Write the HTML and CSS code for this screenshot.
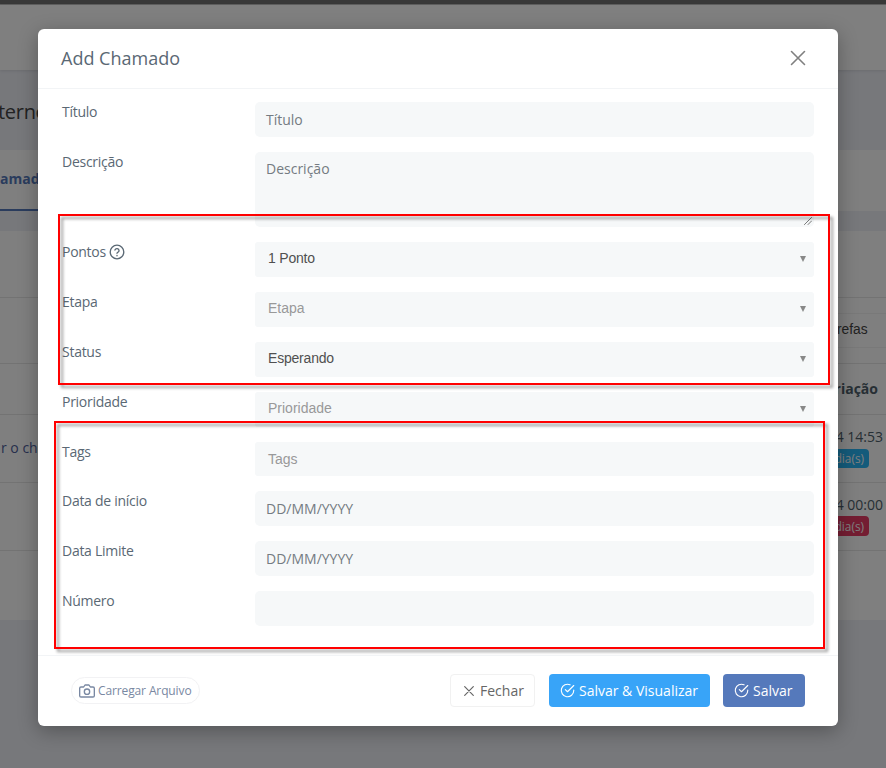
FILE: index.html
```html
<!DOCTYPE html>
<html lang="pt-BR">
<head>
<meta charset="utf-8">
<title>Add Chamado</title>
<link rel="stylesheet" href="styles.css">
</head>
<body>
<div class="page">
  <div class="strip"></div>
  <div class="topbar"></div>
  <div class="page-title">terno</div>
  <div class="tabs"><span class="tab">amado</span></div>
  <div class="card">
    <div class="row row-head"></div>
    <div class="row row-tools"><span class="tool">refas</span></div>
    <div class="row row-cols"><b>riação</b></div>
    <div class="row row-data">
      <span class="link">r o cha</span>
      <div class="when"><span>4 14:53</span><span class="badge info">dia(s)</span></div>
    </div>
    <div class="row row-data">
      <div class="when"><span>4 00:00</span><span class="badge late">dia(s)</span></div>
    </div>
  </div>
</div>
<div class="backdrop"></div>
<div class="modal">
  <header class="modal-header">
    <h1>Add Chamado</h1>
    <svg class="close" viewBox="0 0 16 16"><path d="M1.5 1.5l13 13M14.5 1.5l-13 13"/></svg>
  </header>
  <div class="modal-body">
    <div class="field"><label>Título</label><div class="control">Título</div></div>
    <div class="field"><label>Descrição</label><div class="control area">Descrição
      <svg class="grip" viewBox="0 0 9 9"><path d="M.5 8.5l8-8M4.5 8.5l4-4"/></svg></div></div>
    <div class="field"><label>Pontos <svg class="help" viewBox="0 0 24 24"><circle cx="12" cy="12" r="10.2"/><path d="M8.9 9a3.2 3.2 0 0 1 6.2 1c0 2-3.1 2.6-3.1 4M12 17v.6"/></svg></label><div class="control select chosen">1 Ponto<i class="arrow"></i></div></div>
    <div class="field"><label>Etapa</label><div class="control select">Etapa<i class="arrow"></i></div></div>
    <div class="field"><label>Status</label><div class="control select chosen">Esperando<i class="arrow"></i></div></div>
    <div class="field"><label>Prioridade</label><div class="control select">Prioridade<i class="arrow"></i></div></div>
    <div class="field"><label>Tags</label><div class="control select tags">Tags</div></div>
    <div class="field"><label>Data de início</label><div class="control">DD/MM/YYYY</div></div>
    <div class="field"><label>Data Limite</label><div class="control">DD/MM/YYYY</div></div>
    <div class="field"><label>Número</label><div class="control"></div></div>
  </div>
  <footer class="modal-footer">
    <div class="upload"><svg class="camera" viewBox="0 0 24 24"><path d="M23 19a2 2 0 0 1-2 2H3a2 2 0 0 1-2-2V8a2 2 0 0 1 2-2h4l2-3h6l2 3h4a2 2 0 0 1 2 2z"/><circle cx="12" cy="13" r="4"/></svg>Carregar Arquivo</div>
    <div class="btn plain"><svg class="x" viewBox="0 0 10 10"><path d="M.7.7l8.6 8.6M9.3.7L.7 9.3"/></svg>Fechar</div>
    <div class="btn view"><svg class="check" viewBox="0 0 24 24"><path d="M22 11.1V12a10 10 0 1 1-5.9-9.1M22 4L12 14l-3.5-3.5"/></svg>Salvar &amp; Visualizar</div>
    <div class="btn save"><svg class="check" viewBox="0 0 24 24"><path d="M22 11.1V12a10 10 0 1 1-5.9-9.1M22 4L12 14l-3.5-3.5"/></svg>Salvar</div>
  </footer>
</div>
<div class="mark mark-one"></div>
<div class="mark mark-two"></div>
</body>
</html>
```
FILE: styles.css
```css
* { box-sizing: border-box; }
body {
  margin: 0;
  height: 768px;
  overflow: hidden;
  position: relative;
  font: 14px/20px "Open Sans", sans-serif;
  color: #4e5e6a;
}
svg { fill: none; stroke: currentColor; stroke-linecap: round; stroke-linejoin: round; flex: none; }

.page { height: 768px; background: #eef0f7; }
.strip { height: 5px; background: #707070; border-bottom: 1px solid #bebebe; }
.topbar { height: 65px; background: #fff; box-shadow: 0 1px 3px rgba(0, 0, 0, .1); }
.page-title { height: 80px; padding-top: 28px; text-indent: -2px; font-size: 20px; letter-spacing: -.3px; line-height: 28px; color: #444; }
.tabs { height: 61px; background: #fff; display: flex; }
.tab { width: 60px; padding-top: 19px; font-weight: 700; color: #5579bb; border-bottom: 2px solid #5579bb; }
.card { height: 389px; margin-top: 20px; background: #fff; }
.row { display: flex; justify-content: flex-end; border-bottom: 1px solid #e6e6e6; }
.row-head { height: 67px; }
.row-tools { height: 66px; align-items: center; }
.tool { width: 100px; height: 35px; padding: 6px 0 0 50px; border: 1px solid #f2f2f2; border-right: 0; font-family: "Liberation Sans", sans-serif; font-size: 13.8px; color: #444; }
.row-cols { height: 51px; align-items: center; padding-right: 8px; }
.row-data { height: 68px; padding: 12px 3px 0 0; }
.link { margin: 11px auto 0 1px; color: #4e5e9a; }
.when { display: flex; flex-direction: column; align-items: flex-start; gap: 1px; }
.badge { height: 20px; margin-left: -6px; padding: 0 5px; border-radius: 4px; color: #fff; font-size: 11.8px; line-height: 20px; }
.info { height: 19px; margin-top: 1px; line-height: 19px; background: #29b6f6; }
.late { background: #e83a64; }
.backdrop { position: absolute; inset: 0; background: rgba(0, 0, 0, .5); }

.modal {
  position: absolute;
  left: 38px;
  top: 29px;
  width: 800px;
  height: 697px;
  background: #fff;
  border-radius: 6px;
  box-shadow: 0 5px 20px rgba(0, 0, 0, .3);
}
.modal-header { height: 60px; padding: 0 32px 1px 23px; display: flex; align-items: center; justify-content: space-between; border-bottom: 1px solid #f2f4f6; }
h1 { margin: 0; font-size: 18px; line-height: 26px; font-weight: 400; color: #5a6874; }
.close { width: 16px; height: 16px; color: #808080; stroke-width: 1.6; }
.modal-body { height: 566px; padding: 13px 24px 0; display: flex; flex-direction: column; gap: 15px; }
.field { display: flex; }
label { width: 193px; height: 20px; display: flex; gap: 3px; align-items: center; letter-spacing: -.27px; color: #5a6874; }
.help { width: 16px; height: 16px; stroke-width: 2; }
.control { flex: 1; height: 35px; padding: 8px 11px 0; background: #f6f8f9; border-radius: 5px; color: #747b82; position: relative; }
.area { height: 75px; padding-top: 7px; }
.grip { position: absolute; right: 2px; bottom: 2px; width: 8px; height: 8px; color: #444; stroke-width: .8; }
.select { padding: 6px 8px 0 13px; border-radius: 3px; display: flex; justify-content: space-between; font-family: "Liberation Sans", sans-serif; color: #999; }
.chosen { color: #505050; letter-spacing: -.2px; }
.tags { height: 34px; padding-top: 7px; }
.arrow { margin-top: 8px; width: 6px; height: 6px; background: #888; clip-path: polygon(0 0, 100% 0, 50% 100%); }
.modal-footer { height: 71px; padding: 0 33px 2px; display: flex; align-items: center; border-top: 1px solid #f2f4f6; }
.upload { width: 129px; height: 27px; margin-right: auto; padding: 1px 0 0 7px; display: flex; align-items: center; gap: 3px; border: 1px solid #f2f2f4; border-radius: 14px; font-size: 12px; letter-spacing: -.12px; color: #7988a2; }
.camera { width: 16px; height: 16px; stroke-width: 2; }
.btn { height: 33px; padding: 1px 0 0 11px; display: flex; align-items: center; gap: 4px; border-radius: 4px; color: #fff; }
.plain { width: 85px; padding-left: 13px; gap: 6px; border: 1px solid #f1f1f1; color: #666; }
.x { width: 10px; height: 10px; stroke-width: 1.2; }
.view { width: 161px; margin-left: 14px; background: #38a4f8; font-weight: 500; }
.save { width: 82px; margin-left: 13px; background: #5579bb; font-weight: 500; }
.check { width: 15px; height: 15px; stroke-width: 1.8; }

.mark { position: absolute; border: 2px solid #f00; filter: drop-shadow(3px 3px 1.5px rgba(0, 0, 0, .4)); }
.mark-one { left: 58px; top: 214px; width: 772px; height: 171px; }
.mark-two { left: 54px; top: 421px; width: 771px; height: 228px; }
```
